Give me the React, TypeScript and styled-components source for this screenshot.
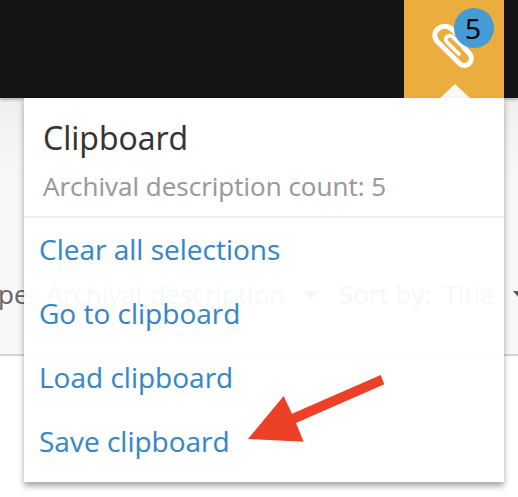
import React from "react";
import styled, { createGlobalStyle } from "styled-components";

const GlobalStyle = createGlobalStyle`
  * { box-sizing: border-box; }
  body {
    margin: 0;
    background: #fff;
    font-family: "Open Sans", "Noto Sans", sans-serif;
    -webkit-text-stroke: 0.12px currentColor;
  }
`;

const Page = styled.div`
  position: relative;
  width: 518px;
  height: 497px;
  overflow: hidden;
  background: #fff;
`;

const TopBar = styled.header`
  position: relative;
  display: flex;
  justify-content: flex-end;
  height: 98px;
  padding-right: 14px;
  background: #141414;
  box-shadow: 0 2px 3px rgba(0, 0, 0, 0.25);
`;

const ClipboardButton = styled.button`
  position: relative;
  width: 100px;
  height: 98px;
  padding: 0;
  border: 0;
  background: #ebae3e;
`;

const ClipIcon = styled.svg`
  position: absolute;
  left: 24px;
  top: 18px;
`;

const Badge = styled.span`
  position: absolute;
  left: 50px;
  top: 8px;
  width: 40px;
  height: 40px;
  padding-right: 2px;
  border-radius: 50%;
  background: #459bd5;
  color: #000;
  font: 28px/40px "Open Sans", sans-serif;
  text-align: center;
  -webkit-text-stroke: 0.2px #000;
`;

const Caret = styled.span`
  position: absolute;
  left: 34px;
  bottom: -2px;
  border: solid transparent;
  border-width: 0 17px 16px;
  border-bottom-color: #faf9f7;
`;

const Filters = styled.section`
  display: flex;
  align-items: flex-start;
  height: 258px;
  padding-top: 178px;
  border-bottom: 2px solid #d4d4d4;
  background: linear-gradient(#eef0ef, #f8f8f8 90px);
  font-size: 26px;
  line-height: 36px;
  white-space: nowrap;
`;

const FilterLabel = styled.span<{ $offset: number }>`
  margin-left: ${(p) => p.$offset}px;
  color: #666;
`;

const FilterValue = styled.span<{ $gap: number }>`
  margin-left: ${(p) => p.$gap}px;
  color: #3787c6;
`;

const DownArrow = styled.span<{ $gap: number }>`
  flex: none;
  margin: 15px 0 0 ${(p) => p.$gap}px;
  border: solid transparent;
  border-width: 9px 8px 0;
  border-top-color: #555;
`;

const Menu = styled.div`
  position: absolute;
  left: 24px;
  top: 98px;
  width: 480px;
  height: 384px;
  background: rgba(255, 255, 255, 0.95);
  box-shadow: 0 4px 6px rgba(0, 0, 0, 0.35);
`;

const MenuHeader = styled.div`
  height: 120px;
  padding: 17px 19px 0;
  border-bottom: 2px solid #eee;
`;

const Title = styled.h2`
  margin: 0;
  font-size: 32px;
  line-height: 46px;
  font-weight: 400;
  color: #333;
`;

const Count = styled.p`
  margin: 7px 0 0;
  font-size: 26px;
  line-height: 36px;
  color: #999;
`;

const MenuList = styled.ul`
  margin: 0;
  padding: 0 0 0 15px;
  list-style: none;
`;

const MenuItem = styled.li`
  height: 64px;
  font-size: 28px;
  line-height: 62px;
  color: #3787c6;
`;

const Pointer = styled.svg`
  position: absolute;
  left: 230px;
  top: 360px;
`;

const actions = ["Clear all selections", "Go to clipboard", "Load clipboard", "Save clipboard"];

export default function App() {
  return (
    <Page>
      <GlobalStyle />
      <TopBar>
        <ClipboardButton aria-label="Clipboard">
          <ClipIcon width="50" height="54" viewBox="0 0 150 162" fill="none" stroke="#fff" strokeLinecap="round">
            <path strokeWidth="15" d="M86 46 L72 34 C44 8 4 42 28 71 L93 135 C112 156 142 130 125 107 L108 89" />
            <path strokeWidth="11" d="M93 108 L57 73 C45 60 62 46 76 58 L116 98" />
          </ClipIcon>
          <Badge>5</Badge>
          <Caret />
        </ClipboardButton>
      </TopBar>
      <Filters>
        <FilterLabel $offset={-2}>pe:</FilterLabel>
        <FilterValue $gap={11}>Archival description</FilterValue>
        <DownArrow $gap={18} />
        <FilterLabel $offset={20}>Sort by:</FilterLabel>
        <FilterValue $gap={12}>Title</FilterValue>
        <DownArrow $gap={18} />
      </Filters>
      <Menu>
        <MenuHeader>
          <Title>Clipboard</Title>
          <Count>Archival description count: 5</Count>
        </MenuHeader>
        <MenuList>
          {actions.map((label) => (
            <MenuItem key={label}>{label}</MenuItem>
          ))}
        </MenuList>
      </Menu>
      <Pointer width="170" height="100" viewBox="0 0 510 300">
        <path fill="#ec4127" d="M54 237 161 108 186 161 452 45 463 73 198 189 221 245Z" />
      </Pointer>
    </Page>
  );
}
